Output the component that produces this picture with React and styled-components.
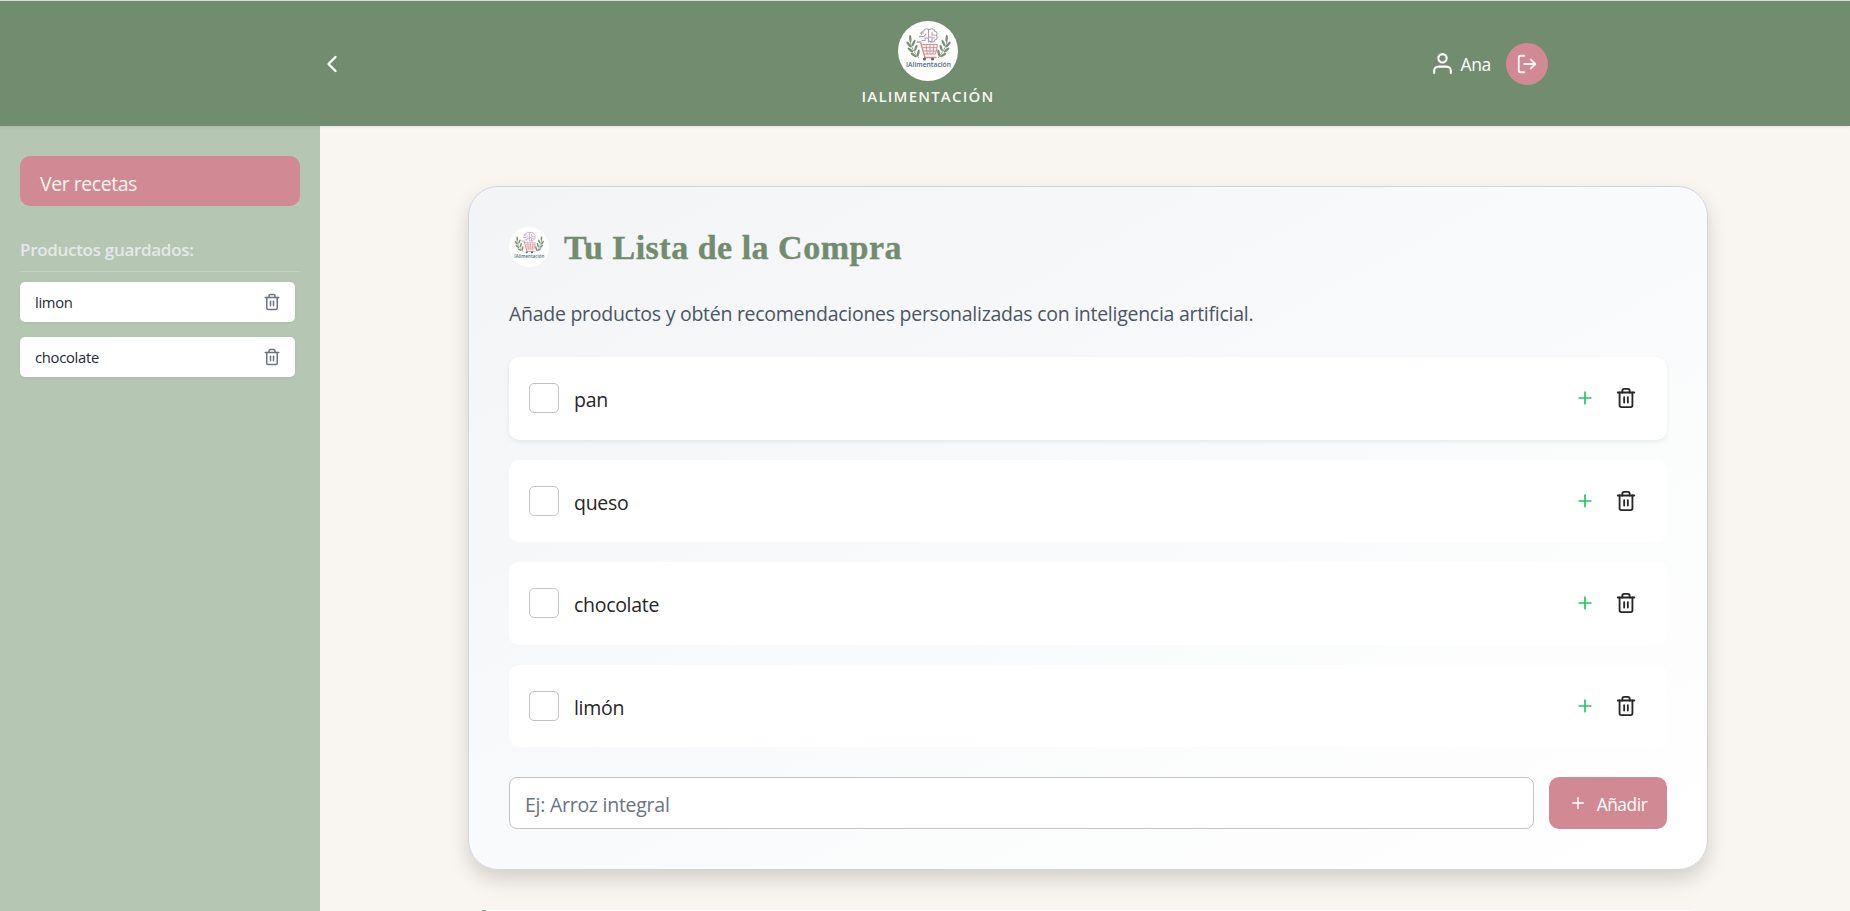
import React from "react";
import styled, { createGlobalStyle } from "styled-components";
import { FiChevronLeft, FiLogOut, FiPlus, FiTrash2, FiUser } from "react-icons/fi";

const Global = createGlobalStyle`
  *, *::before, *::after { box-sizing: border-box; }
  body {
    margin: 0;
    background: #f9f5f0;
    font-family: "Segoe UI", "Open Sans", "Noto Sans", sans-serif;
    overflow: hidden;
  }
  button { font-family: inherit; border: 0; background: none; padding: 0; cursor: pointer; }
  h1, h2, p, ul { margin: 0; padding: 0; }
  svg { display: block; flex: none; }
`;

const Page = styled.div`
  height: 911px;
  display: flex;
  flex-direction: column;
  overflow: hidden;
  border-top: 1px solid #d9dcd9;
`;

const Header = styled.header`
  flex: none;
  height: 125px;
  background: #728c6f;
  color: #f9f5f0;
  display: grid;
  grid-template-columns: 1fr auto 1fr;
  align-items: center;
  padding: 0 302px 0 318px;
  box-shadow: 0 1px 3px rgba(0, 0, 0, 0.08);
  z-index: 1;
`;

const BackButton = styled.button`
  color: #fff;
  justify-self: start;
`;

const Brand = styled.div`
  display: flex;
  flex-direction: column;
  align-items: center;
  padding: 1px 0;
  margin-right: 10px;
  width: 160px;
`;

const BrandName = styled.span`
  margin-top: 5px;
  font-size: 15px;
  line-height: 20px;
  font-weight: 600;
  letter-spacing: 1.2px;
  white-space: nowrap;
`;

const UserArea = styled.div`
  justify-self: end;
  display: flex;
  align-items: center;
  color: #fff;
`;

const UserName = styled.span`
  margin: 1px 15px 0 5px;
  font-size: 17.5px;
  letter-spacing: -0.3px;
`;

const LogoutButton = styled.button`
  width: 42px;
  height: 42px;
  border-radius: 50%;
  background: #d18a93;
  color: #f9f5f0;
  display: grid;
  place-items: center;
`;

const Body = styled.div`
  flex: 1;
  min-height: 0;
  display: flex;
`;

const Sidebar = styled.aside`
  flex: none;
  width: 320px;
  background: #b5c7b2;
  padding: 30px 20px;
`;

const RecipesButton = styled.button`
  width: 100%;
  height: 50px;
  border-radius: 10px;
  background: #d18a93;
  color: #f9f5f0;
  text-align: left;
  padding: 4px 20px 0;
  font-size: 19.5px;
  letter-spacing: -0.45px;
`;

const SavedTitle = styled.h2`
  margin-top: 30px;
  height: 36px;
  border-bottom: 1px solid #c4d2c1;
  color: #e5e7eb;
  font-size: 17px;
  line-height: 27px;
  font-weight: 600;
  letter-spacing: -0.3px;
`;

const SavedList = styled.ul`
  list-style: none;
  margin-top: 10px;
  padding-right: 5px;
  display: flex;
  flex-direction: column;
  gap: 15px;
`;

const SavedItem = styled.li`
  height: 40px;
  padding: 0 14px 0 15px;
  border-radius: 5px;
  background: #fff;
  box-shadow: 0 1px 3px rgba(0, 0, 0, 0.06);
  display: flex;
  align-items: center;
  justify-content: space-between;
  color: #1f2937;
  font-size: 14.8px;
  line-height: 20px;
  letter-spacing: -0.3px;
  svg { color: #6b7280; }
`;

const Main = styled.main`
  flex: 1;
  padding: 60px 142px 0 148px;
  display: flex;
  flex-direction: column;
`;

const Card = styled.section`
  flex: none;
  height: 684px;
  border: 1px solid #d1d5db;
  border-radius: 30px;
  padding: 40px;
  background: linear-gradient(to bottom right, #f3f4f6, #f9fafb 50%, #ffffff);
  box-shadow: 0 10px 20px rgba(0, 0, 0, 0.15);
`;

const TitleRow = styled.div`
  display: flex;
  align-items: center;
  gap: 15px;
  height: 40px;
`;

const Title = styled.h1`
  font-family: Georgia, "Liberation Serif", serif;
  font-size: 34px;
  line-height: 41px;
  letter-spacing: 0.5px;
  color: #728c6f;
  -webkit-text-stroke: 0.4px #728c6f;
`;

const Intro = styled.p`
  margin-top: 32px;
  font-size: 19.5px;
  line-height: 30px;
  letter-spacing: -0.27px;
  color: #4b5563;
`;

const ShoppingList = styled.ul`
  list-style: none;
  margin-top: 28px;
  display: flex;
  flex-direction: column;
  gap: 20px;
`;

const Row = styled.li`
  height: 82.5px;
  border-radius: 10px;
  background: #fff;
  padding: 0 30px 0 20px;
  display: flex;
  align-items: center;
  box-shadow: ${(p) => (p.$raised ? "0 2px 5px rgba(0, 0, 0, 0.07)" : "none")};
  color: #262626;
`;

const Checkbox = styled.span`
  width: 30px;
  height: 30px;
  border: 1px solid #c4c4c4;
  border-radius: 5px;
  background: #fff;
`;

const RowLabel = styled.span`
  flex: 1;
  padding-top: 3px;
  margin-left: 15px;
  font-size: 19.5px;
  letter-spacing: -0.3px;
`;

const RowActions = styled.div`
  display: flex;
  align-items: center;
  gap: 20px;
`;

const IconButton = styled.button`
  color: ${(p) => p.$color};
`;

const AddForm = styled.form`
  margin-top: 30px;
  display: flex;
  gap: 15px;
  height: 52px;
`;

const Input = styled.input`
  flex: 1;
  border: 1px solid #c4c4c4;
  border-radius: 8px;
  background: #fff;
  padding: 2px 15px 0;
  font-family: inherit;
  font-size: 19.5px;
  letter-spacing: -0.26px;
  &::placeholder { color: #6b7280; opacity: 1; }
`;

const AddButton = styled.button`
  width: 118px;
  border-radius: 10px;
  background: #d18a93;
  color: #fff;
  display: flex;
  align-items: center;
  justify-content: center;
  gap: 10px;
  font-size: 17.3px;
  letter-spacing: -0.4px;
  span { padding-top: 3px; }
`;

const NextSection = styled.section`
  position: relative;
  flex: none;
  margin-top: 40px;
  height: 80px;
  border-radius: 20px;
  background: #fff;
  &::before {
    content: "";
    position: absolute;
    left: 14px;
    top: 0;
    width: 4px;
    height: 4px;
    background: #8f9f90;
  }
`;

const Leaf = ({ x, y, r }) => (
  <ellipse cx={x} cy={y} rx="1.2" ry="3.5" transform={`rotate(${r} ${x} ${y})`} />
);

const Sprig = () => (
  <g fill="#789078">
    <path d="M21 37C16 31 13 26 12 20" fill="none" stroke="#789078" strokeWidth=".8" />
    <Leaf x={12.3} y={17.5} r={-4} />
    <Leaf x={10.8} y={23.5} r={-38} />
    <Leaf x={15.6} y={22} r={25} />
    <Leaf x={12.4} y={29} r={-48} />
    <Leaf x={17.8} y={27} r={18} />
    <Leaf x={15.8} y={34} r={-58} />
    <Leaf x={20.3} y={32} r={12} />
  </g>
);

const Logo = ({ size }) => (
  <svg width={size} height={size} viewBox="0 0 60 60" aria-label="IAlimentación">
    <circle cx="30" cy="30" r="30" fill="#fefefc" />
    <Sprig />
    <g transform="translate(61 0) scale(-1 1)">
      <Sprig />
    </g>
    <g fill="none" stroke="#b79bbb" strokeWidth="1.1" strokeLinecap="round">
      <path d="M30.500 8.500c-2.500-1.500-4.500-.3-4.600 1.500-2.300.2-3 2-2.200 3.400M30.500 8.500V21M22 15.500h4l2-2.500M24 19.500h3v-2.500h3M22.500 12h3" />
      <path d="M31.500 8.500c2.500-1.500 5-.3 5.200 1.600 2.400.5 3 3 1.600 4.300 1.600 1.500.8 4.200-1.300 4.500-.6 2.200-3.500 3-5.500 1.400M34 11.500v2.500h3M34 20v-3h2.500M31.500 16h2" />
    </g>
    <circle cx="22" cy="15.500" r="1" fill="#b79bbb" />
    <g fill="none" stroke="#d98b94" strokeLinecap="round" strokeLinejoin="round">
      <path d="M19.500 21h3l4.500 15.500h11" strokeWidth="1.400" />
      <path d="M23.500 23.500h16l-2 9.500H26M25 26.700h14M25.600 30h13M28 23.500l1.200 9.500M32 23.500v9.500M36 23.500l-1 9.500" strokeWidth="1" />
    </g>
    <circle cx="26.500" cy="38" r="1.600" fill="#4f6b7c" />
    <circle cx="34.500" cy="38" r="1.600" fill="#4f6b7c" />
    <text x="30.500" y="45.800" textAnchor="middle" textLength="45" lengthAdjust="spacingAndGlyphs" fontFamily="Open Sans, sans-serif" fontSize="7.500" fontWeight="600" fill="#4f6b7c">
      IAlimentación
    </text>
  </svg>
);

const saved = ["limon", "chocolate"];
const products = ["pan", "queso", "chocolate", "limón"];

export default function App() {
  return (
    <>
      <Global />
      <Page>
        <Header>
          <BackButton aria-label="Volver">
            <FiChevronLeft size={28} />
          </BackButton>
          <Brand>
            <Logo size={60} />
            <BrandName>IALIMENTACIÓN</BrandName>
          </Brand>
          <UserArea>
            <FiUser size={25} />
            <UserName>Ana</UserName>
            <LogoutButton aria-label="Cerrar sesión">
              <FiLogOut size={22} />
            </LogoutButton>
          </UserArea>
        </Header>
        <Body>
          <Sidebar>
            <RecipesButton>Ver recetas</RecipesButton>
            <SavedTitle>Productos guardados:</SavedTitle>
            <SavedList>
              {saved.map((name) => (
                <SavedItem key={name}>
                  <span>{name}</span>
                  <FiTrash2 size={18} />
                </SavedItem>
              ))}
            </SavedList>
          </Sidebar>
          <Main>
            <Card>
              <TitleRow>
                <Logo size={40} />
                <Title>Tu Lista de la Compra</Title>
              </TitleRow>
              <Intro>
                Añade productos y obtén recomendaciones personalizadas con inteligencia artificial.
              </Intro>
              <ShoppingList>
                {products.map((name, i) => (
                  <Row key={name} $raised={i === 0}>
                    <Checkbox />
                    <RowLabel>{name}</RowLabel>
                    <RowActions>
                      <IconButton $color="#22c55e" aria-label="Guardar">
                        <FiPlus size={20} />
                      </IconButton>
                      <IconButton $color="#262626" aria-label="Eliminar">
                        <FiTrash2 size={22} />
                      </IconButton>
                    </RowActions>
                  </Row>
                ))}
              </ShoppingList>
              <AddForm onSubmit={(e) => e.preventDefault()}>
                <Input placeholder="Ej: Arroz integral" />
                <AddButton>
                  <FiPlus size={18} />
                  <span>Añadir</span>
                </AddButton>
              </AddForm>
            </Card>
            <NextSection />
          </Main>
        </Body>
      </Page>
    </>
  );
}
